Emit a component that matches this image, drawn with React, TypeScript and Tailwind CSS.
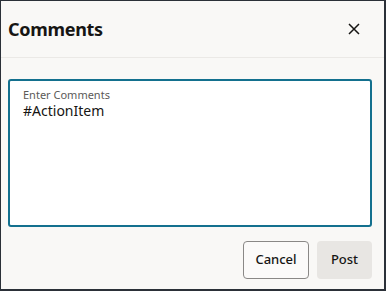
import type React from "react"

const CloseIcon = () => (
  <svg width="12" height="12" viewBox="0 0 12 12" fill="none" stroke="#161513" strokeWidth="1.5">
    <path d="M1 1l10 10M11 1L1 11" />
  </svg>
)

const App: React.FC = () => {
  return (
    <div
      className="w-[386px] h-[291px] bg-[#f9f8f6] border border-[#2b3038] border-r-2 border-b-2 flex flex-col text-[#161513]"
      style={{ fontFamily: '"Noto Sans", "Open Sans", sans-serif' }}
    >
      {/* header */}
      <div className="h-[57px] flex items-center justify-between pl-[7px] pr-[22px] border-b border-[#ebe9e6]">
        <h1 className="text-[18px] font-bold leading-none tracking-[-0.3px]">Comments</h1>
        <button className="w-4 h-4 flex items-center justify-center">
          <CloseIcon />
        </button>
      </div>

      {/* body */}
      <div className="px-[7px] pt-[21px]">
        <div className="h-[148px] w-[364px] bg-white border-2 border-[#13708e] rounded-[3px] pl-[13px] pt-[8px]">
          <div className="text-[11px] leading-[12px] text-[#5c5a58]">Enter Comments</div>
          <div className="mt-[2px] text-[14px] leading-[16px] text-[#161513]">#ActionItem</div>
        </div>
      </div>

      {/* footer */}
      <div className="flex justify-end gap-2 pr-[12px] pt-[14px]">
        <button className="w-[66px] h-[38px] rounded-[4px] border border-[#8a8886] bg-[#fbfaf9] text-[13px] font-medium">
          Cancel
        </button>
        <button className="w-[55px] h-[38px] rounded-[4px] bg-[#e8e6e3] text-[13px] font-medium">
          Post
        </button>
      </div>
    </div>
  )
}

export default App
